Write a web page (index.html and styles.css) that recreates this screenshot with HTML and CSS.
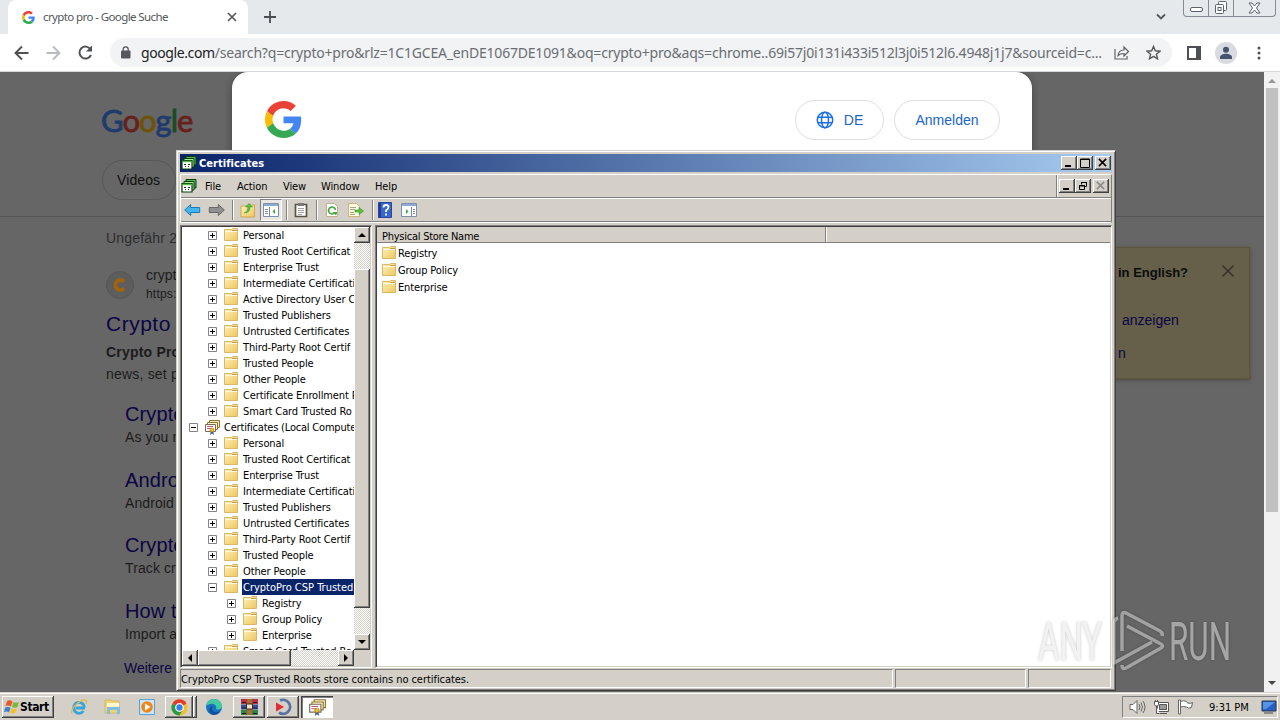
FILE: index.html
```html
<!DOCTYPE html>
<html lang="en">
<head>
    <meta charset="utf-8">
    <title>Certificates</title>
    <link rel="stylesheet" href="styles.css">
</head>
<body>
    <svg class="sprites">
        <linearGradient id="folder-fill" x1="0" y1="0" x2="1" y2="1"><stop offset="0" stop-color="#fff3bd"/><stop offset="1" stop-color="#edc65f"/></linearGradient>
        <symbol id="folder" viewBox="0 0 16 16">
            <path d="M1.500 2.500h7l1-1h5v12h-13z" fill="url(#folder-fill)" stroke="#d9b766"/>
            <path d="M9 3.500h5" stroke="#c99a3c"/><path d="M2 4.500h12" stroke="#fffbe0"/>
        </symbol>
        <symbol id="plus" viewBox="0 0 9 9"><path d="M.5.5h8v8h-8z" fill="#fff" stroke="#848484"/><path d="M2 4.500h5M4.500 2v5" stroke="#000"/></symbol>
        <symbol id="minus" viewBox="0 0 9 9"><path d="M.5.5h8v8h-8z" fill="#fff" stroke="#848484"/><path d="M2 4.500h5" stroke="#000"/></symbol>
        <symbol id="certs" viewBox="0 0 16 16">
            <path d="M5.500 1.500h10v7h-10z" fill="#f8edb8" stroke="#8c7434"/>
            <path d="M3.500 3.500h10v7h-10z" fill="#fff6cf" stroke="#8c7434"/>
            <path d="M1.500 5.500h10v7h-10z" fill="#fff" stroke="#776a56"/>
            <path d="M3 7.500h6M3 9.500h4" stroke="#b45a73"/>
            <path d="M7 11l-1 5 2-1.500 2 1.500-1-5z" fill="#3858a8"/><circle cx="8" cy="11" r="2" fill="#f2bd25" stroke="#9f7414" stroke-width=".6"/>
        </symbol>
        <symbol id="mmc" viewBox="0 0 16 16">
            <path d="M5 1.500h10v8.500H5z" fill="#58b558" stroke="#073f0c"/>
            <path d="M3 3.500h10v8.500H3z" fill="#a5e88e" stroke="#073f0c"/>
            <path d="M1 5.500h10v8.500H1z" fill="#fff" stroke="#073f0c" stroke-width="1.200"/>
            <path d="M1.500 6.500h9" stroke="#59b64b" stroke-width="1.500"/><path d="M3 9.500h2m2 0h2M4 11.500h1m2 0h1" stroke="#222"/>
        </symbol>
        <symbol id="google-g" viewBox="0 0 48 48">
            <path fill="#ea4335" d="M24 9.500c3.540 0 6.710 1.220 9.210 3.600l6.850-6.850C35.900 2.380 30.470 0 24 0 14.620 0 6.510 5.380 2.560 13.220l7.980 6.190C12.430 13.720 17.740 9.500 24 9.500z"/>
            <path fill="#4285f4" d="M46.980 24.550c0-1.570-.15-3.090-.38-4.550H24v9.020h12.940c-.58 2.960-2.260 5.480-4.780 7.180l7.730 6c4.510-4.180 7.090-10.360 7.090-17.650z"/>
            <path fill="#fbbc05" d="M10.530 28.590c-.48-1.450-.76-2.990-.76-4.590s.27-3.140.76-4.590l-7.980-6.190C.92 16.460 0 20.120 0 24s.92 7.540 2.560 10.780z"/>
            <path fill="#34a853" d="M24 48c6.480 0 11.930-2.130 15.890-5.810l-7.730-6c-2.150 1.450-4.920 2.300-8.160 2.300-6.260 0-11.570-4.220-13.470-9.910l-7.980 6.190C6.510 42.620 14.620 48 24 48z"/>
        </symbol>
        <symbol id="up" viewBox="0 0 8 8"><path d="M0 6l4-4 4 4z"/></symbol>
        <symbol id="down" viewBox="0 0 8 8"><path d="M0 2h8L4 6z"/></symbol>
        <symbol id="left" viewBox="0 0 8 8"><path d="M6 0v8L2 4z"/></symbol>
        <symbol id="right" viewBox="0 0 8 8"><path d="M2 0v8l4-4z"/></symbol>
        <symbol id="close" viewBox="0 0 10 10"><path d="M1 1l8 8M9 1l-8 8" stroke="currentColor" stroke-width="1.700"/></symbol>
    </svg>

    <!-- browser -->
    <header class="tab-strip">
        <div class="tab">
            <svg width="13" height="13"><use href="#google-g"/></svg>
            <span class="tab-title">crypto pro - Google Suche</span>
            <svg class="tab-close" width="10" height="10"><use href="#close"/></svg>
        </div>
        <svg class="new-tab" width="12" height="12" viewBox="0 0 12 12"><path d="M6 0v12M0 6h12" stroke="#4a4d51" stroke-width="1.800"/></svg>
        <svg class="tab-search" width="12" height="8" viewBox="0 0 12 8"><path d="M2 1.500l4 4 4-4" fill="none" stroke="#55585c" stroke-width="1.800"/></svg>
        <div class="caption">
            <span><svg width="13" height="6"><rect x=".5" y=".5" width="12" height="4" rx="1.500" fill="#fff" stroke="#5b626c"/></svg></span>
            <span><svg width="14" height="14" fill="#fff" stroke="#5b626c"><rect x="4.500" y=".5" width="8" height="9" rx="1"/><rect x="1.500" y="3.500" width="8" height="9" rx="1"/><rect x="4" y="6.500" width="3" height="3"/></svg></span>
            <span><svg width="13" height="12" viewBox="0 0 13 12"><path d="M1 1h3l2.500 3L9 1h3L8.500 6l3.500 5H9L6.500 8 4 11H1l3.500-5z" fill="#fff" stroke="#5b626c"/></svg></span>
        </div>
    </header>
    <div class="toolbar">
        <svg class="nav-icons" width="82" height="20" viewBox="0 0 82 20" fill="none" stroke-width="1.900">
            <path d="M14.500 10H2M8 3.500L1.500 10 8 16.500" stroke="#4d5054"/>
            <path d="M32.500 10H45M39 3.500l6.500 6.500-6.500 6.500" stroke="#b9bbbe"/>
            <path d="M76.500 6.200A6 6 0 1 0 77 12" stroke="#4d5054"/><path d="M78 2.500v6h-6z" fill="#4d5054"/>
        </svg>
        <div class="omnibox">
            <svg width="10" height="13" viewBox="0 0 10 13"><rect y="4.500" width="9.500" height="8" rx="1" fill="#54575b"/><path d="M2.200 5V3.300a2.500 2.500 0 0 1 5 0V5" fill="none" stroke="#54575b" stroke-width="1.300"/></svg>
            <span class="url"><b>google.com</b>/search?q=crypto+pro&amp;rlz=1C1GCEA_enDE1067DE1091&amp;oq=crypto+pro&amp;aqs=chrome..69i57j0i131i433i512l3j0i512l6.4948j1j7&amp;sourceid=c...</span>
            <svg class="share" width="16" height="15" viewBox="0 0 16 15" fill="none" stroke="#5f6368" stroke-width="1.200"><path d="M1 4v10h12v-3"/><path d="M4 10.500c.5-4 3-5.500 6-5.500V2l4.500 4.500L10 11V8.500c-2.500 0-4.500.5-6 2z"/></svg>
            <svg width="15" height="15" viewBox="0 0 15 15"><path d="M7.500 1.500l1.800 4.300 4.700.4-3.600 3 1.100 4.600-4-2.500-4 2.500 1.100-4.600-3.600-3 4.700-.4z" fill="none" stroke="#54575b" stroke-width="1.400"/></svg>
        </div>
        <svg class="side-panel" width="14" height="14"><rect x="1" y="1" width="12" height="12" fill="#fff" stroke="#4d5054" stroke-width="2"/><rect x="9" width="5" height="14" fill="#4d5054"/></svg>
        <svg class="avatar" width="22" height="22"><circle cx="11" cy="11" r="11" fill="#d8dce1"/><circle cx="11" cy="7.800" r="3" fill="#46536f"/><path d="M5 17v-1.500c0-5 12-5 12 0V17z" fill="#46536f"/></svg>
        <svg class="dots" width="4" height="14" fill="#4d5054"><circle cx="2" cy="2" r="1.500"/><circle cx="2" cy="7" r="1.500"/><circle cx="2" cy="12" r="1.500"/></svg>
    </div>

    <main class="viewport">
        <div class="page">
            <div class="page-top">
                <div class="logo"><i class="b">G</i><i class="r">o</i><i class="y">o</i><i class="b">g</i><i class="g">l</i><i class="r">e</i></div>
                <div class="chip">Videos</div>
            </div>
            <div class="page-body">
                <div class="results">
                    <p class="stats">Ungefähr 2</p>
                    <div class="site">
                        <svg width="28" height="28"><circle cx="14" cy="14" r="13.500" fill="#5d5d5d" stroke="#555"/><path d="M18 10.500A5 5 0 1 0 18 17.500" fill="none" stroke="#a2630f" stroke-width="4"/></svg>
                        <div>crypt<small>https:</small></div>
                    </div>
                    <h3>Crypto</h3>
                    <p class="snippet"><b>Crypto Pro</b><br>news, set p</p>
                    <div class="sublink"><h4>Crypto</h4><p>As you n</p></div>
                    <div class="sublink"><h4>Andro</h4><p>Android</p></div>
                    <div class="sublink"><h4>Crypto</h4><p>Track cr</p></div>
                    <div class="sublink"><h4>How t</h4><p>Import a</p></div>
                    <p class="more">Weitere</p>
                </div>
                <div class="lang-box">
                    <strong>in English?</strong>
                    <svg width="12" height="12" viewBox="0 0 12 12"><path d="M.5.5l11 11M11.500.5l-11 11" stroke="#332f27" stroke-width="1.400"/></svg>
                    <span class="show">anzeigen</span>
                    <span>n</span>
                </div>
            </div>
            <div class="consent">
                <svg width="37" height="37"><use href="#google-g"/></svg>
                <span class="pill lang"><svg width="18" height="18" viewBox="0 0 18 18" fill="none" stroke="#1a6fe0" stroke-width="1.500"><circle cx="9" cy="9" r="7.700"/><ellipse cx="9" cy="9" rx="3.500" ry="7.700"/><path d="M2 6.300h14M2 11.700h14"/></svg>DE</span>
                <span class="pill">Anmelden</span>
            </div>
        </div>
        <div class="page-scroll">
            <svg width="8" height="8" fill="#969696"><use href="#up"/></svg>
            <div class="page-thumb"></div>
            <svg width="8" height="8" fill="#444"><use href="#down"/></svg>
        </div>
    </main>

    <!-- taskbar -->
    <footer class="taskbar">
        <div class="start raised">
            <svg width="16" height="16" viewBox="0 0 16 16"><path d="M3 2q3-1.500 5.500.5L7 7.500Q4.500 6 1.500 7z" fill="#e8582a"/><path d="M9.500 3q3 1.500 5.500 0l-1.500 5q-3 1.500-5.500 0z" fill="#7ab83a"/><path d="M1.200 8.500q3-1.300 5.300.3L5 13.500Q3 12 0 13z" fill="#3f7fd0"/><path d="M7.600 9.200q3 1.500 5.300 0l-1.500 4.500q-3 1.500-5.300 0z" fill="#f3bf2c"/></svg>Start
        </div>
        <div class="task"><svg width="18" height="18" viewBox="0 0 18 18"><path d="M15 10H5.500M14.500 9.500a5.500 5.500 0 1 0-1 3.500" fill="none" stroke="#35a5dc" stroke-width="2.800"/><path d="M2 15.500C-.5 11 10 1.500 15.500 2q2 .5.500 4" fill="none" stroke="#e3b947" stroke-width="1.300"/></svg></div>
        <div class="task"><svg width="18" height="18" viewBox="0 0 18 18"><path d="M1 4V2h6l1 1h7v12H1z" fill="#efd477" stroke="#c9a544" stroke-width=".6"/><path d="M3 5h12v4H3z" fill="#fff8cf"/><path d="M3 9h13v7h-3v-4H6v4H3z" fill="#82bce0"/></svg></div>
        <div class="task"><svg width="18" height="18" viewBox="0 0 18 18"><path d="M1.500 1.500h15v15h-15z" fill="#c9e6f8" stroke="#5ba2d4"/><circle cx="9" cy="9" r="5.800" fill="#f08618"/><path d="M7 5.500v7L12.500 9z" fill="#fff"/></svg></div>
        <div class="stack">
            <div class="task raised"><svg width="17" height="17" viewBox="0 0 18 18"><circle cx="9" cy="9" r="8.500" fill="#f5bf22"/><path d="M9 9L1.600 4.700A8.500 8.500 0 0 1 16.400 4.700z" fill="#df3e31"/><path d="M9 9L1.600 4.700A8.500 8.500 0 0 0 9 17.500l3.500-6z" fill="#2b9b4a"/><circle cx="9" cy="9" r="4" fill="#3b7ded" stroke="#fff" stroke-width="1.300"/></svg></div>
            <div class="behind raised"></div>
        </div>
        <div class="task edge"><svg width="18" height="18" viewBox="0 0 18 18"><circle cx="9" cy="9" r="8" fill="#1673bf"/><path d="M1.200 8C2 3 5.500 1 9 1c5 0 8 3.500 8 7 0 4-5 4-6 3 2-4-4-8-9.800-3z" fill="#45c9a2"/><path d="M8 8c-3 4 1 8 7 5-2 3-5 4-7 4-5-2-5-9 0-9z" fill="#115098"/></svg></div>
        <div class="task raised"><svg width="17" height="16" viewBox="0 0 17 16"><path d="M0 0h17v5H0z" fill="#b63145"/><path d="M0 5.500h17v5H0z" fill="#394f9b"/><path d="M0 11h17v5H0z" fill="#338248"/><path d="M6 0h5v16H6z" fill="#a66f2e"/><path d="M5.500 5h6v5h-6z" fill="#eee4cb" stroke="#432b18"/><path d="M1 3.500h4m7 0h4M1 9h4m7 0h4M1 14.500h4m7 0h4" stroke="#271d31"/></svg></div>
        <div class="task raised"><svg width="18" height="18" viewBox="0 0 18 18"><path d="M6 2.500a7 7 0 1 1-1 12" fill="none" stroke="#58739e" stroke-width="2.800"/><path d="M2 4.500l8 4.500-8 4.500z" fill="#e22b35"/></svg></div>
        <div class="task pressed"><svg width="18" height="18"><use href="#certs"/></svg></div>
        <div class="tray">
            <svg width="17" height="16" viewBox="0 0 17 16" fill="none" stroke="#666"><path d="M1 5.500h3l4-4v13l-4-4H1z" fill="#fff"/><path d="M10 5q2 3 0 6M12 3.500q3 4.500 0 9M14 2q4 6 0 12"/></svg>
            <svg width="17" height="16" viewBox="0 0 17 16" fill="#fff" stroke="#555"><path d="M4.500 3.500h11v9h-11z"/><path d="M6.500 5.500h7v5h-7z" fill="#9a9a9a"/><path d="M7 14.500h7M3.500 7v7.500h3"/><path d="M1.500 2.500h4v3l-1 1.500h-2l-1-1.500zM2.500 1v2M4.500 1v2"/></svg>
            <svg width="17" height="16" viewBox="0 0 17 16" fill="#fff" stroke="#666"><path d="M3.500 2.500q3-1.500 6 0l1 1.500q3 1 5-.5l-1 5q-3 1.500-5-.5-3-1-6 0z"/><path d="M1.500 1h2v14h-2z"/></svg>
            <span class="clock">9:31 PM</span>
            <svg width="16" height="14" viewBox="0 0 16 14"><path d="M1 1h14v10H1z" fill="#285fc0" stroke="#28364e"/><path d="M2 2h12L5 9H2z" fill="#5593e9"/><path d="M3 13h9" stroke="#444"/></svg>
        </div>
    </footer>

    <!-- certificates console -->
    <section class="window">
        <div class="title-bar">
            <svg width="16" height="16"><use href="#mmc"/></svg>
            <span>Certificates</span>
            <div class="win-buttons">
                <i class="raised"><svg width="10" height="10"><path d="M1 8h6" stroke="#000" stroke-width="2"/></svg></i>
                <i class="raised"><svg width="10" height="10"><path d="M.5 1h9v8.500h-9zM.5 1.500h9" fill="none" stroke="#000"/></svg></i>
                <i class="raised last"><svg width="9" height="9"><use href="#close"/></svg></i>
            </div>
        </div>
        <div class="bars">
            <nav class="menu-bar">
                <svg width="16" height="16"><use href="#mmc"/></svg>
                <span class="file">File</span><span class="action">Action</span><span class="view">View</span><span class="win">Window</span><span>Help</span>
                <div class="mdi">
                    <i class="raised"><svg width="10" height="10"><path d="M1 8h6" stroke="#000" stroke-width="2"/></svg></i>
                    <i class="raised"><svg width="10" height="10" fill="none" stroke="#000"><path d="M3.500 3.500v-2h5v4h-2M3 1.500h6M1.500 4.500h5v4h-5zM1 5h6"/></svg></i>
                    <i class="raised last off"><svg width="9" height="9"><use href="#close"/></svg></i>
                </div>
            </nav>
            <div class="tools">
                <svg width="17" height="16" viewBox="0 0 17 16"><path d="M.7 8l6-5.500v3h9v5h-9v3z" fill="#43b4ee" stroke="#1c7cb8"/></svg>
                <svg width="17" height="16" viewBox="0 0 17 16" class="fwd"><path d="M16.300 8l-6-5.500v3h-9v5h9v3z" fill="#909090" stroke="#666"/></svg>
                <hr>
                <svg width="16" height="16" viewBox="0 0 16 16"><path d="M1 4h6l1-1h6.500v12H1z" fill="url(#folder-fill)" stroke="#cfa64c"/><path d="M4 11q4-1 4-6H5.500L9 1.500 12.500 5H10q0 6-6 6z" fill="#50c33a" stroke="#2d9624" stroke-width=".5"/></svg>
                <span class="toggled"><svg width="16" height="14" viewBox="0 0 16 14"><path d="M.5.5h15v13H.5z" fill="#fff" stroke="#7c8fad"/><path d="M1 2h14" stroke="#8faad2" stroke-width="2"/><path d="M6.500 4v9M2 6.500h3m-3 2h3m-3 2h3" stroke="#7d879a"/><path d="M12 6v5L9.500 8.500z" fill="#3ba93b"/></svg></span>
                <hr>
                <svg width="14" height="16" viewBox="0 0 14 16"><path d="M1.500 2.500h11v12h-11z" fill="#fff" stroke="#5c5145" stroke-width="1.700"/><path d="M4 1h6v3H4z" fill="#777"/><path d="M4 6.500h6m-6 2h6m-6 2h6m-6 2h4" stroke="#a0a0a0"/></svg>
                <hr class="wide">
                <svg width="16" height="16" viewBox="0 0 16 16"><path d="M2.500 1.500h8l3 3v10h-11z" fill="#fff" stroke="#c1ae8d"/><path d="M11.500 8a3.500 3.500 0 1 0-1 3" fill="none" stroke="#42a943" stroke-width="1.700"/><path d="M13.500 10h-5l3.500 3.500z" fill="#42a943"/></svg>
                <svg width="18" height="16" viewBox="0 0 18 16" class="export"><path d="M1.500 1.500h8l3 3v10h-11z" fill="#fffbe8" stroke="#cdb57b"/><path d="M3 5.500h6m-6 2h5m-5 3h4m-4 2h5" stroke="#b0a27e"/><path d="M8 8h4V5.500L16.500 9 12 12.500V10H8z" fill="#57c43d" stroke="#349925" stroke-width=".6"/></svg>
                <hr class="tight">
                <svg width="14" height="16" viewBox="0 0 14 16"><path d="M.5.5h13v15H.5z" fill="#3866cd" stroke="#25469c"/><path d="M1 1h2v14H1z" fill="#203e91"/><path d="M5.500 5.500q0-2.500 2.500-2.500t2.500 2.300Q10.500 7 8 8.500V10M8 11.500v2" fill="none" stroke="#fff" stroke-width="1.800"/></svg>
                <svg width="16" height="14" viewBox="0 0 16 14" class="action-pane"><path d="M.5.5h15v13H.5z" fill="#fff" stroke="#7c8fad"/><path d="M1 2h14" stroke="#8faad2" stroke-width="2"/><path d="M10.500 4v9M12 6.500h2m-2 2h2m-2 2h2" stroke="#7d879a"/><path d="M5 6v5l2.500-2.500z" fill="#3ba93b"/></svg>
            </div>
        </div>
        <div class="panes">
            <div class="tree-pane">
                <div class="tree-main">
                    <div class="tree" id="tree"></div>
                    <div class="vscroll">
                        <i class="raised"><svg width="8" height="8"><use href="#up"/></svg></i>
                        <div class="vthumb raised"></div>
                        <i class="raised"><svg width="8" height="8"><use href="#down"/></svg></i>
                    </div>
                </div>
                <div class="hscroll">
                    <i class="raised"><svg width="8" height="8"><use href="#left"/></svg></i>
                    <div class="hthumb raised"></div>
                    <i class="raised"><svg width="8" height="8"><use href="#right"/></svg></i>
                    <div class="corner"></div>
                </div>
            </div>
            <div class="list-pane">
                <div class="list-head"><span>Physical Store Name</span></div>
                <div class="list-row"><svg width="16" height="16"><use href="#folder"/></svg>Registry</div>
                <div class="list-row"><svg width="16" height="16"><use href="#folder"/></svg>Group Policy</div>
                <div class="list-row"><svg width="16" height="16"><use href="#folder"/></svg>Enterprise</div>
            </div>
        </div>
        <div class="status">
            <span class="message">CryptoPro CSP Trusted Roots store contains no certificates.</span>
            <span class="mid"></span>
            <span class="end"></span>
        </div>
    </section>

    <svg class="watermark" width="200" height="70" viewBox="0 0 200 70">
        <g class="mark-text">
            <text x="4" y="54" textLength="64" lengthAdjust="spacingAndGlyphs">ANY</text>
            <text x="135" y="54" textLength="62" lengthAdjust="spacingAndGlyphs">RUN</text>
        </g>
        <path class="mark-logo" d="M88 45V10q0-5 4-3l34 18q3 2 2 5M93 20l34 18q3 2 0 4L92 62q-4 2-4-3M84 12q-4 1-4 5v40l38-21"/>
    </svg>

    <script>
        // depth, label, state
        const nodes = [
            [1, 'Personal'], [1, 'Trusted Root Certificat'], [1, 'Enterprise Trust'],
            [1, 'Intermediate Certificati'], [1, 'Active Directory User C'],
            [1, 'Trusted Publishers'], [1, 'Untrusted Certificates'],
            [1, 'Third-Party Root Certif'], [1, 'Trusted People'], [1, 'Other People'],
            [1, 'Certificate Enrollment R'], [1, 'Smart Card Trusted Ro'],
            [0, 'Certificates (Local Compute', 'open'],
            [1, 'Personal'], [1, 'Trusted Root Certificat'], [1, 'Enterprise Trust'],
            [1, 'Intermediate Certificati'], [1, 'Trusted Publishers'],
            [1, 'Untrusted Certificates'], [1, 'Third-Party Root Certif'],
            [1, 'Trusted People'], [1, 'Other People'],
            [1, 'CryptoPro CSP Trusted', 'open'],
            [2, 'Registry'], [2, 'Group Policy'], [2, 'Enterprise'],
            [1, 'Smart Card Trusted Ro']
        ];

        document.getElementById('tree').innerHTML = nodes.map(([depth, label, state]) => `
            <div class="node depth-${depth} ${state || ''}">
                <svg width="9" height="9"><use href="#${state ? 'minus' : 'plus'}"/></svg>
                <svg class="node-icon" width="16" height="16"><use href="#${depth ? 'folder' : 'certs'}"/></svg>
                <span>${label}</span>
            </div>`).join('');
    </script>
</body>
</html>
```
FILE: styles.css
```css
* {
    box-sizing: border-box;
    margin: 0;
    padding: 0;
}

body {
    width: 1280px;
    height: 720px;
    overflow: hidden;
    position: relative;
    display: flex;
    flex-direction: column;
    font-family: "DejaVu Sans Condensed", "DejaVu Sans", sans-serif;
    font-stretch: condensed;
    font-size: 11px;
    color: #000;
}

svg {
    display: block;
    flex-shrink: 0;
}

i {
    font-style: normal;
}

.sprites {
    position: absolute;
    width: 0;
    height: 0;
}

/* Browser chrome */
.tab-strip {
    height: 34px;
    background: #e6e9ec;
    display: flex;
    align-items: center;
    padding-left: 8px;
}

.tab {
    width: 240px;
    height: 34px;
    background: #fff;
    border-radius: 8px 8px 0 0;
    display: flex;
    align-items: center;
    padding: 0 11px 0 14px;
}

.tab-title {
    flex: 1;
    margin-left: 8px;
    padding-bottom: 1px;
    font-family: "Noto Sans", sans-serif;
    font-size: 11.5px;
    letter-spacing: -0.6px;
    color: #53575b;
}

.tab-close {
    color: #55585c;
}

.new-tab {
    margin-left: 16px;
}

.tab-search {
    margin-left: auto;
    margin-right: 16px;
}

.caption {
    width: 93px;
    height: 17px;
    margin-right: 4px;
    align-self: flex-start;
    display: flex;
    border: 1px solid #858b92;
    border-top: none;
    border-radius: 0 0 4px 4px;
}

.caption span {
    width: 25px;
    display: flex;
    align-items: center;
    justify-content: center;
    border-right: 1px solid #858b92;
}

.caption span:first-child svg {
    margin-top: 4px;
}

.caption span:last-child {
    flex: 1;
    border: none;
}

.toolbar {
    height: 38px;
    background: #fff;
    border-bottom: 1px solid #d5d7da;
    display: flex;
    align-items: center;
    padding-left: 14px;
}

.omnibox {
    width: 1062px;
    height: 29px;
    margin-left: 14px;
    background: #f1f3f4;
    border-radius: 15px;
    display: flex;
    align-items: center;
    padding: 0 11px;
}

.url {
    width: 974px;
    margin-left: 10px;
    font-family: "Noto Sans", sans-serif;
    font-size: 14px;
    letter-spacing: -0.2px;
    white-space: nowrap;
    color: #6a6e73;
}

.url b {
    font-weight: normal;
    letter-spacing: -0.4px;
    color: #202124;
}

.share {
    margin-right: 16px;
}

.side-panel {
    margin-left: 15px;
}

.avatar {
    margin-left: 14px;
}

.dots {
    margin-left: 20px;
}

/* Page */
.viewport {
    height: 620px;
    display: flex;
}

.page {
    width: 1264px;
    height: 620px;
    position: relative;
    overflow: hidden;
    background: #666;
    font-family: "Liberation Sans", Arial, sans-serif;
    font-size: 14px;
    color: #1c1c1c;
}

.page-top {
    height: 145px;
    padding: 29px 0 0 101px;
    border-bottom: 1px solid #555;
}

.logo {
    height: 59px;
    font: 400 31px/38px Lato, sans-serif;
    letter-spacing: -1px;
    -webkit-text-stroke: 0.8px currentColor;
}

.b { color: #1f3b6d; }
.r { color: #66211c; }
.y { color: #6d5308; }
.g { color: #194b28; }

.chip {
    width: 74px;
    height: 40px;
    margin-left: 1px;
    line-height: 39px;
    padding-left: 14px;
    border: 1px solid #585858;
    border-radius: 20px;
    letter-spacing: 0.1px;
    color: #111;
}

.page-body {
    display: flex;
    justify-content: space-between;
    align-items: flex-start;
}

.results {
    padding-left: 106px;
    width: 240px;
    white-space: nowrap;
}

.stats {
    margin-top: 12px;
    line-height: 18px;
    letter-spacing: 0.2px;
    color: #2c2e30;
}

.site {
    display: flex;
    align-items: center;
    gap: 12px;
    margin-top: 19px;
    height: 38px;
    line-height: 19px;
}

.site small {
    display: block;
    font-size: 12px;
    letter-spacing: 0.2px;
}

.results h3 {
    font-size: 21px;
    font-weight: normal;
    line-height: 26px;
    margin-top: 7px;
    letter-spacing: 0.5px;
    color: #0a0544;
}

.snippet {
    margin-top: 4px;
    line-height: 22px;
    letter-spacing: 0.2px;
}

.sublink {
    height: 65.6px;
    padding-left: 19px;
    letter-spacing: 0.1px;
}

.snippet + .sublink {
    margin-top: 16px;
}

.sublink h4 {
    font-size: 20px;
    font-weight: normal;
    line-height: 26px;
    color: #0a0544;
}

.sublink p {
    line-height: 20px;
}

.more {
    margin: -5px 0 0 18px;
    line-height: 20px;
    color: #0a0544;
}

.lang-box {
    width: 250px;
    height: 132px;
    margin: 30px 14px 0 0;
    padding: 14px 15px 0 117px;
    display: flex;
    flex-wrap: wrap;
    justify-content: space-between;
    align-content: flex-start;
    background: #665f4a;
    border: 1px solid #5b553b;
    box-shadow: 0 1px 4px #4a4738;
    font-size: 14px;
    line-height: 20px;
    color: #0a0544;
}

.lang-box strong {
    font-size: 13px;
    line-height: 21px;
    color: #0c0c0c;
}

.lang-box svg {
    margin-top: 3px;
}

.lang-box span {
    width: 100%;
    margin-top: 13px;
}

.lang-box .show {
    margin-top: 27px;
    padding-left: 4px;
}

.consent {
    position: absolute;
    left: 232px;
    top: 0;
    width: 800px;
    height: 560px;
    padding: 28px 32px 0 33px;
    display: flex;
    align-items: flex-start;
    gap: 10px;
    background: #fff;
    border-radius: 16px;
    box-shadow: 0 2px 8px rgba(0, 0, 0, 0.35);
}

.consent > svg {
    margin: 1px auto 0 0;
}

.pill {
    width: 106px;
    height: 40px;
    padding-bottom: 1px;
    display: flex;
    align-items: center;
    justify-content: center;
    gap: 10px;
    border: 1px solid #dcdee1;
    border-radius: 20px;
    color: #1a65c8;
}

.lang {
    width: 89px;
}

.page-scroll {
    width: 16px;
    background: #f1f1f1;
    display: flex;
    flex-direction: column;
    align-items: center;
    padding: 5px 0;
}

.page-thumb {
    width: 12px;
    height: 424px;
    margin: 3px 0 auto;
    background: #c1c1c1;
}

/* Classic Windows look */
.raised {
    background: #d4d0c8;
    box-shadow: inset -1px -1px #404040, inset 1px 1px #fff, inset -2px -2px #808080;
}

.taskbar {
    height: 28px;
    background: #d4d0c8;
    border-top: 1px solid #d4d0c8;
    box-shadow: inset 0 1px #fff;
    display: flex;
    align-items: center;
    padding: 1px 2px 0 2px;
}

.start {
    width: 52px;
    height: 22px;
    margin-right: 9px;
    padding-left: 2px;
    display: flex;
    align-items: center;
    font-weight: bold;
    font-size: 12px;
    letter-spacing: -0.4px;
}

.task {
    width: 32px;
    height: 22px;
    margin-right: 2px;
    display: flex;
    align-items: center;
    justify-content: center;
}

.stack {
    display: flex;
    width: 32px;
}

.stack .task {
    width: 28px;
    margin: 0;
}

.behind {
    width: 4px;
    height: 22px;
}

.edge {
    margin: 0 3px 0 1px;
}

.pressed {
    background: #fff;
    box-shadow: inset 1px 1px #404040, inset 2px 2px #808080;
}

.tray {
    height: 22px;
    width: 156px;
    margin-left: auto;
    padding: 0 2px 0 6px;
    display: flex;
    align-items: center;
    gap: 7px;
    border: 1px solid;
    border-color: #808080 #fff #fff #808080;
}

.clock {
    width: 43px;
    margin: 0 5px 0 8px;
    white-space: nowrap;
}

.window {
    position: absolute;
    left: 176px;
    top: 150px;
    width: 940px;
    height: 541px;
    padding: 3px 3px 1px;
    display: flex;
    flex-direction: column;
    background: #d4d0c8;
    border: 1px solid;
    border-color: #d4d0c8 #404040 #404040 #d4d0c8;
    box-shadow: inset 1px 1px #fff, inset -1px -1px #808080;
}

.title-bar {
    height: 18px;
    padding: 0 1px;
    display: flex;
    align-items: center;
    gap: 2px;
    background: linear-gradient(90deg, #0a246a, #a6caf0);
    font-weight: bold;
    letter-spacing: 0.05px;
    color: #fff;
}

.title-bar span {
    line-height: 19px;
}

.win-buttons,
.mdi {
    margin-left: auto;
    display: flex;
    color: #000;
}

.win-buttons i,
.mdi i {
    width: 16px;
    height: 14px;
    display: flex;
    align-items: center;
    justify-content: center;
    padding: 0 1px 1px 0;
}

.last {
    margin-left: 2px;
}

.bars {
    flex-shrink: 0;
    margin-top: 2px;
    height: 49px;
    border: 1px solid;
    border-color: #fff #808080 #fff #fff;
}

.menu-bar {
    height: 23px;
    display: flex;
    align-items: center;
    border-bottom: 1px solid #808080;
}

.menu-bar > span {
    padding-top: 1px;
    letter-spacing: -0.1px;
}

.menu-bar .file {
    width: 32px;
    margin-left: 8px;
}

.menu-bar .action {
    width: 46px;
}

.menu-bar .view {
    width: 38px;
}

.menu-bar .win {
    width: 54px;
}

.mdi {
    height: 22px;
    align-items: center;
    padding: 0 2px;
    border-left: 1px solid #808080;
    box-shadow: inset 1px 0 #fff;
}

.off {
    color: #8b8b8b;
}

.tools {
    height: 24px;
    display: flex;
    align-items: center;
    padding-left: 3px;
    border-top: 1px solid #fff;
    border-bottom: 1px solid #808080;
}

.tools hr {
    width: 2px;
    height: 20px;
    margin: 0 6px 0 7px;
    border: none;
    border-left: 1px solid #808080;
    border-right: 1px solid #fff;
}

.tools .wide {
    margin-left: 8px;
}

.tools .tight {
    margin-right: 4px;
}

.fwd {
    margin-left: 7px;
}

.export {
    margin-left: 7px;
}

.action-pane {
    margin-left: 9px;
}

.toggled {
    width: 22px;
    height: 22px;
    margin: 0 -3px 0 4px;
    display: flex;
    align-items: center;
    justify-content: center;
    background: #ebe8e3;
    border: 1px solid;
    border-color: #808080 #fff #fff #808080;
}

.panes {
    flex: 1;
    min-height: 0;
    margin: 2px 0 1px;
    display: flex;
    gap: 3px;
}

.tree-pane,
.list-pane {
    background: #fff;
    border: 1px solid;
    border-color: #808080 #fff #fff #808080;
    box-shadow: inset 1px 1px #404040, inset -1px -1px #d4d0c8;
    padding: 1px;
}

.tree-pane {
    width: 192px;
}

.list-pane {
    flex: 1;
}

.tree-main {
    height: 423px;
    display: flex;
}

.tree {
    width: 172px;
    overflow: hidden;
}

.node {
    height: 16px;
    display: flex;
    align-items: center;
    white-space: nowrap;
    padding-left: 26px;
    letter-spacing: -0.12px;
}

.depth-0 {
    padding-left: 7px;
    letter-spacing: -0.2px;
}

.depth-2 {
    padding-left: 45px;
}

.node-icon {
    margin: 0 3px 0 6px;
}

.node span {
    height: 16px;
    line-height: 18px;
    padding: 0 1px;
}

.depth-1.open span {
    flex: 1;
    background: #0a246a;
    letter-spacing: 0;
    color: #fff;
}

.vscroll {
    width: 16px;
    display: flex;
    flex-direction: column;
    background: repeating-conic-gradient(#d4d0c8 0 25%, #fff 0 50%) 0 0 / 2px 2px;
}

.vscroll i,
.hscroll i {
    width: 16px;
    height: 16px;
    display: flex;
    align-items: center;
    justify-content: center;
}

.vthumb {
    height: 339px;
    margin: 26px 0 auto;
}

.hscroll {
    height: 16px;
    display: flex;
    background: repeating-conic-gradient(#d4d0c8 0 25%, #fff 0 50%) 0 0 / 2px 2px;
}

.hthumb {
    width: 93px;
    margin-right: auto;
}

.corner {
    width: 16px;
    background: #d4d0c8;
}

.list-head {
    height: 16px;
    margin-bottom: 2px;
    background: #d4d0c8;
    border-bottom: 1px solid #808080;
    display: flex;
    letter-spacing: -0.25px;
}

.list-head span {
    width: 449px;
    padding-left: 5px;
    line-height: 19px;
    border-right: 1px solid #808080;
    box-shadow: 1px 0 #fff;
}

.list-row {
    height: 17px;
    padding-left: 4px;
    display: flex;
    align-items: center;
    gap: 1px;
    letter-spacing: -0.15px;
}

.list-row svg {
    margin-top: -2px;
}

.status {
    height: 20px;
    padding-right: 1px;
    display: flex;
    gap: 2px;
}

.status span {
    height: 19px;
    border: 1px solid;
    border-color: #808080 #fff #fff #808080;
    line-height: 19px;
    letter-spacing: -0.05px;
}

.status .message {
    width: 713px;
}

.status .mid {
    width: 131px;
}

.status .end {
    flex: 1;
}

/* Watermark */
.watermark {
    position: absolute;
    left: 1034px;
    top: 606px;
    filter: drop-shadow(0 0 1.5px rgba(0, 0, 0, 0.45));
    opacity: 0.5;
}

.mark-text {
    fill: #e6e6e6;
    font: 400 53px Roboto, sans-serif;
}

.mark-logo {
    fill: none;
    stroke: #dedede;
    stroke-width: 3.5;
    stroke-linejoin: round;
}
```
